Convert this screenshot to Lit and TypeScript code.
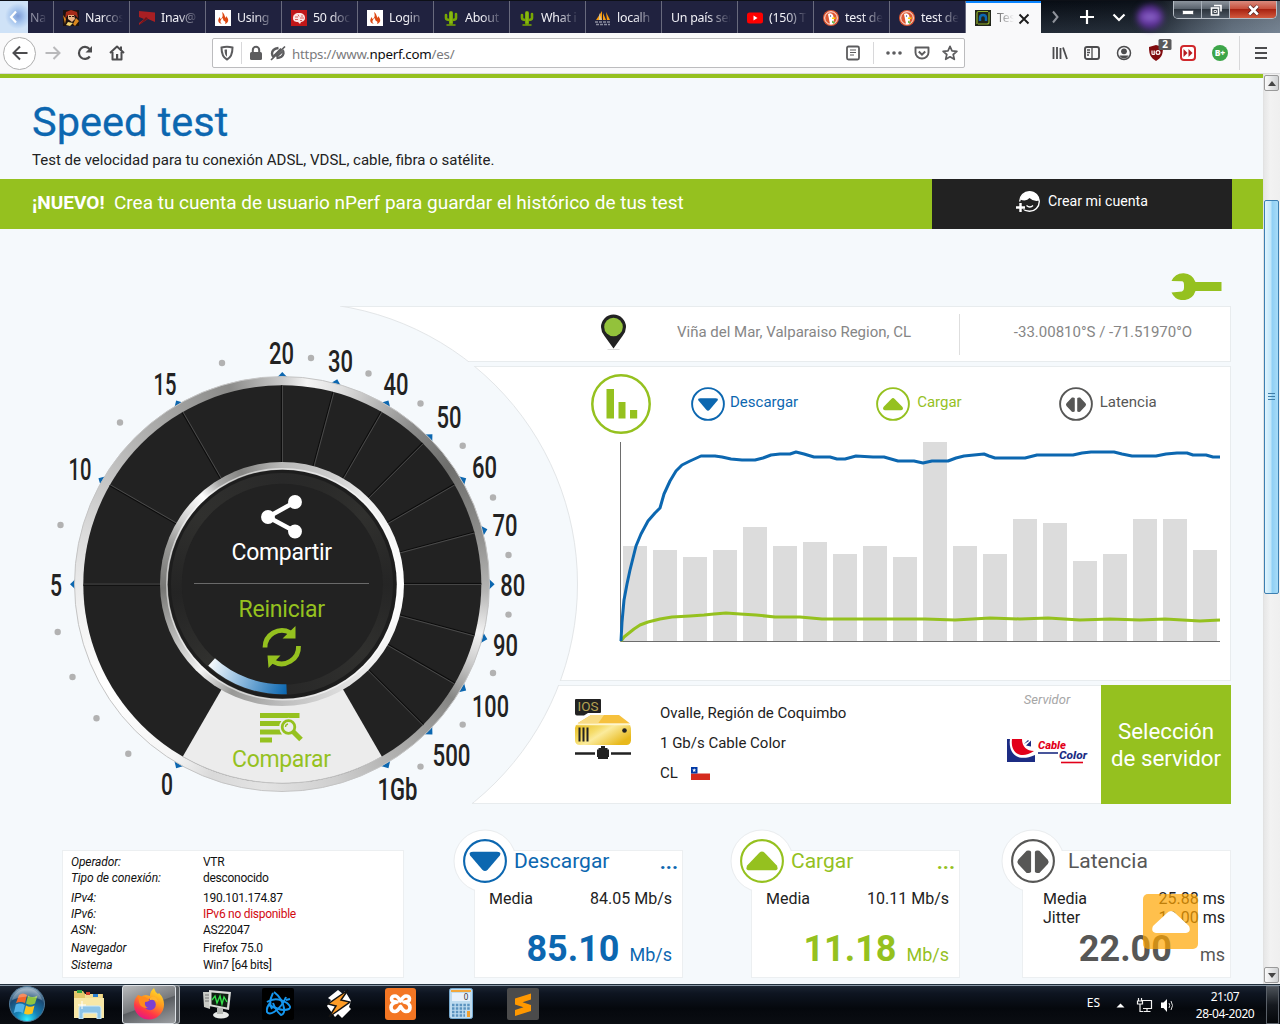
import { LitElement, html, svg, css, nothing } from "lit";
import { customElement } from "lit/decorators.js";

const LIME = "#95c11f";
const BLUE = "#0c67b0";
const GREY = "#575756";

type Kind = "down" | "up" | "lat";
const COLORS: Record<Kind, string> = { down: BLUE, up: LIME, lat: GREY };

const TABS = [
  { icon: "anime", text: "Narcos" },
  { icon: "inav", text: "Inav@" },
  { icon: "flame", text: "Using" },
  { icon: "brain", text: "50 doc" },
  { icon: "flame", text: "Login" },
  { icon: "cactus", text: "About" },
  { icon: "cactus", text: "What i" },
  { icon: "pma", text: "localh" },
  { icon: "", text: "Un país ser" },
  { icon: "yt", text: "(150) T" },
  { icon: "duck", text: "test de" },
  { icon: "duck", text: "test de" },
];

const BARS = [546, 550, 557, 550, 527, 546, 542, 554, 546, 557, 442, 546, 554, 519, 523, 561, 554, 519, 519, 550];

const DOWN_LINE =
  "621,641 622,622 624,600 627,584 630,570 636,546 641,534 648,521 655,513 660,508 664,494 670,481 676,471 682,465 690,461 701,456 715,456 722,457 731,459 742,460 755,460 763,458 771,455 780,454 790,454 796,452 804,454 814,457 830,457 837,459 845,459 856,456 873,457 884,457 891,459 898,461 914,461 923,463 932,461 948,461 956,458 964,456 984,454 989,456 995,458 1025,458 1037,455 1073,455 1082,453 1091,452 1108,452 1114,452 1122,454 1132,456 1156,456 1166,454 1177,453 1187,453 1193,455 1206,455 1213,457 1220,457";
const UP_LINE =
  "621,641 624,637 629,633 634,629 640,625 648,622 660,619 672,617 690,616 704,615 714,614 726,613 740,614 756,615 775,617 800,617 822,619 850,619 885,619 925,619 955,620 990,618 1020,619 1048,618 1080,620 1110,619 1140,620 1165,619 1200,621 1220,620";

const TICKS: [string, number, number, number, number][] = [
  ["0", 120, 167, 795, 12],
  ["5", 180, 56, 596, 12],
  ["10", 210, 80, 480, 23],
  ["15", 240, 165, 395, 23],
  ["20", 270, 281.5, 364, 25],
  ["30", 285, 340.5, 372, 25],
  ["40", 300, 396, 395, 25],
  ["50", 315, 449, 428, 25],
  ["60", 330, 484.5, 478, 25],
  ["70", 345, 505, 536, 25],
  ["80", 0, 512.7, 596, 25],
  ["90", 15, 505.5, 656, 25],
  ["100", 30, 490.5, 717, 37],
  ["500", 45, 451.5, 766, 38],
  ["1Gb", 60, 397.5, 800, 40],
];

const DOTS = [
  [222, 363], [311, 358], [120, 422.5], [60.5, 525], [368.5, 373.5], [420.5, 403.5], [462.7, 445.7],
  [493, 497.5], [508.5, 555], [508.5, 614.6], [493, 673], [462.7, 724.6], [420.5, 766.6],
  [57.7, 632], [72.5, 677], [96.5, 718.3], [128.3, 753.7],
];

const glyph = (kind: Kind) =>
  kind === "down"
    ? svg`<path d="M-14-6Q-16-9.500-11-9.500H11Q16-9.500 14-6L2.500 7.500Q0 10-2.500 7.500Z"/>`
    : kind === "up"
      ? svg`<path d="M-14 3.500L-2.500-8.500Q0-11 2.500-8.500L14 3.500Q16 8 12 8H-12Q-16 8-14 3.500Z"/>`
      : svg`<path d="M-1.800-9.500V9.500Q-2.500 11-6 10.500L-14 2Q-15.500 0-14-2L-6-10.500Q-2.500-11-1.800-9.500ZM1.800-9.500V9.500Q2.500 11 6 10.500L14 2Q15.500 0 14-2L6-10.500Q2.500-11 1.800-9.500Z"/>`;

const favicon = (name: string) => {
  switch (name) {
    case "anime":
      return svg`<path fill="#1d1210" d="M0 0h16v16H0z"/><path fill="#a52a18" d="M3 2l5-2 6 2 1 6-3-3H5L2 9z"/><path fill="#e9b183" d="M5 5l6 0 1 4-3 3-4-3z"/><path fill="#d9871f" d="M0 5l3 4-1 5zM13 8l3 3-4 5-2-2z"/><path fill="#f1d36d" d="M5 12l5 1-3 3-4-1z"/><path fill="#2b1410" d="M6 6h2v1H6zM9 6h2v1H9z"/>`;
    case "inav":
      return svg`<path fill="#a81f23" d="M0 1l16 1.500V12L9 9l-9 6z"/><path fill="#20223f" d="M0 7l5 2-5 4z"/><path fill="#6e1519" d="M0 15l9-6.500L7 7z"/>`;
    case "flame":
      return svg`<path fill="#fff" d="M0 0h16v16H0z"/><path fill="#dd4814" d="M7 2c3 2 2 4 4 6l0-2c4 4 2 7-1 8 1-2 0-3-1-3-1-1-1-2-1-3-2 1-4 4-1 6-4-1-5-4-2-7 0 1 0 2 1 2 2-2 2-4 1-7z"/>`;
    case "brain":
      return svg`<path fill="#c01718" d="M0 0h16v16H0z"/><path fill="#fbe6e3" d="M2 8c0-3 2-5 6-5s6 2 6 5-3 4-4 4l-1 2-2-2c-3 0-5-1-5-4z"/><path d="M4 7h3M7 4.500l1 2M9 8h4M4 9.500h3M10 6l2 0M9 10.500h2" stroke="#d0403c" fill="none" stroke-width=".8"/>`;
    case "cactus":
      return svg`<g stroke="#77a704" stroke-linecap="round" fill="none"><path stroke-width="4" d="M8 3v10"/><path stroke-width="2.600" d="M3 5v3q0 2 4 2M13 4v4q0 2-4 2"/><path stroke-width="1.500" d="M4 15h8"/></g><path d="M8 2v11" stroke="#9fd02c" stroke-width=".8"/>`;
    case "pma":
      return svg`<path fill="#f89c0e" d="M7 1v9H1zM8 3l3 7H8zM11 2l4 8h-3z"/><path fill="#d2c4a0" d="M4 3l3 7H4z"/><path stroke="#8a8d9e" stroke-width="1.500" d="M0 12h16M1 14.500h14" stroke-dasharray="3 1"/>`;
    case "yt":
      return svg`<rect y="2.500" width="16" height="11" rx="2.500" fill="#f00"/><path fill="#fff" d="M6.500 5.500v5l4-2.500z"/>`;
    case "duck":
      return svg`<circle cx="8" cy="8" r="8" fill="#de5833"/><circle cx="8" cy="8" r="6.300" fill="none" stroke="#fff" stroke-width=".9"/><path fill="#fff" d="M5 4q3-2 5 1l1 4-1 5-3 0z"/><path fill="#fdd20a" d="M9 7.500h4l-1 1.500H9z"/><path fill="#65bc46" d="M9 10.500l3 2-1 1.300-2-1z"/><circle cx="7.500" cy="6" r=".7" fill="#2d4f8e"/>`;
    default:
      return svg`<path fill="#20241a" d="M0 0h16v16H0z"/><path d="M2 14V3q0-1.500 1.500-1.500H13M14 2v10q0 2-2 2H3" fill="none" stroke="#8fae2a" stroke-width="1.200"/><path d="M5 11V8q0-3 3-3t3 3v3" fill="none" stroke="${BLUE}" stroke-width="2.400"/>`;
  }
};

const ico = (body: unknown, size = 16, cls = "") =>
  html`<svg class="ico ${cls}" width=${size} height=${size} viewBox="0 0 ${size} ${size}">${body}</svg>`;

@customElement("app-root")
export class AppRoot extends LitElement {
  static styles = css`
    :host { display: flex; flex-direction: column; width: 1280px; height: 1024px; overflow: hidden; background: #f5f9fc; font-family: Roboto, sans-serif; color: #222; }
    * { box-sizing: border-box; }
    svg { display: block; flex: none; }

    .tabs { display: flex; height: 33px; background: #0a0e17; border-top: 1px solid #0d1017; font: 12.4px "Noto Sans", "Open Sans", sans-serif; letter-spacing: -.25px; color: #f0f0f6; flex: none; }
    .scroll-l { flex: none; width: 28px; display: flex; align-items: center; justify-content: center; background: radial-gradient(circle at 18px 15px, #7c9bd6 0, #a9c7ee 7px, #cfe2f7 13px); }
    .tab { flex: none; width: 76px; display: flex; align-items: center; padding: 1px 0 0 9px; gap: 6px; background: #20223f; border-right: 1px solid #686a7d; }
    .tab .lbl { flex: 1; height: 18px; line-height: 18px; overflow: hidden; white-space: nowrap; margin-right: 6px; -webkit-mask-image: linear-gradient(90deg, #000 45%, transparent); mask-image: linear-gradient(90deg, #000 45%, transparent); }
    .tab.cut { width: 26px; padding-left: 2px; color: #8b8ca0; }
    .tab.cut .lbl { margin-right: 6px; }
    .tab.plain .lbl { -webkit-mask-image: linear-gradient(90deg, #000 60%, transparent); mask-image: linear-gradient(90deg, #000 60%, transparent); }
    .tab.active { background: #f9f9fa; border-right: 0; border-top: 2px solid #0a84ff; color: #666; padding-top: 0; width: 75px; }
    .tab.active .lbl { margin-right: 2px; -webkit-mask-image: linear-gradient(90deg, #000, transparent); mask-image: linear-gradient(90deg, #000, transparent); }
    .tab.active .close { margin: 2px 11px 0 -4px; }
    .aero { flex: 1; display: flex; align-items: flex-start; background: linear-gradient(180deg, rgba(10,14,20,.2), rgba(120,140,160,.25)), linear-gradient(90deg, #070c14 0%, #0b1119 45%, #39424d 62%, #5f6b78 80%, #76828f 100%); }
    .strip { display: flex; align-items: center; height: 31px; flex: none; }
    .strip svg { margin-left: 6px; margin-right: 10px; }
    .glow { width: 26px; height: 24px; border-radius: 50%; background: radial-gradient(ellipse 14px 6px at center, #9a80d8, rgba(110,60,170,0.9) 80%, transparent), #5b2f96; filter: blur(3px); }
    .win { display: flex; flex: none; margin-left: 10px; height: 18px; width: 104px; border: 1px solid #b7bec6; border-top: 0; border-radius: 0 0 5px 5px; overflow: hidden; }
    .win .b { display: flex; align-items: center; justify-content: center; height: 17px; width: 28px; border-right: 1px solid #a7afb8; background: linear-gradient(#8c949d, #5a636d 45%, #2c343d 50%, #4d5763); }
    .win .x { width: 46px; border: 0; background: linear-gradient(#d98a7d, #c8503d 45%, #a82312 50%, #d2593d); }

    .bar { display: flex; align-items: center; height: 41px; background: #f9f9fa; border-bottom: 1px solid #dcdcde; padding-left: 3px; flex: none; }
    .cell { flex: none; width: 32px; height: 32px; display: flex; align-items: center; justify-content: center; color: #4c4c4e; }
    .back { border: 1px solid #aeaeae; border-radius: 50%; background: #fff; width: 33px; height: 33px; margin-right: 1px; }
    .url { display: flex; flex: none; align-items: center; width: 753px; height: 30px; margin-left: 79px; border: 1px solid #bcbcbe; border-radius: 2px; background: #fff; font: 13.3px "Noto Sans", "Open Sans", sans-serif; letter-spacing: -.23px; color: #7a7a7c; }
    .url .cell { width: 28px; height: 28px; }
    .url .wide { width: 40px; }
    .url .more { margin-left: 6px; fill: #5c5c5e; }
    .url b { font-weight: 400; color: #0c0c0d; }
    .addr { flex: 1; white-space: nowrap; padding: 2px 0 0 6px; }
    .sep { width: 1px; height: 22px; background: #d8d8da; }
    .tools { display: flex; align-items: center; margin-left: 79px; }
    .tools .sep { height: 34px; margin-left: 3px; }
    .tools .last { width: 41px; }

    .view { display: flex; height: 910px; flex: none; }
    .page { width: 1263px; border-top: 4px solid #95c11f; position: relative; overflow: hidden; display: flex; flex-direction: column; }
    .scroll { width: 17px; border-left: 1px solid #e2e2e2; background: linear-gradient(90deg, #e6e6e6, #f2f2f2 40%, #efefef); display: flex; flex-direction: column; align-items: flex-start; padding: 1px 0; }
    .sbtn { width: 15px; height: 16px; border: 1px solid #9a9a9a; border-radius: 2px; background: linear-gradient(90deg, #fafafa, #cfd1d3); display: flex; align-items: center; justify-content: center; }
    .thumb { width: 15px; height: 394px; margin: 109px 0 auto; border: 1px solid #3c7fb1; border-radius: 2px; background: linear-gradient(90deg, #e0f4fd, #bfe6fa 45%, #90d0f5 55%, #a8dcf7); display: flex; align-items: center; justify-content: center; }
    h1 { margin: 20px 0 0 32px; font-size: 41.5px; font-weight: 400; line-height: 48px; color: #0c67b0; -webkit-text-stroke: .3px #0c67b0; }
    .sub { margin: 4px 0 0 32px; font-size: 15px; line-height: 20px; }
    .promo { display: flex; align-items: center; justify-content: space-between; height: 50px; margin-top: 9px; padding: 0 31px 0 32px; background: #95c11f; color: #fff; font-size: 19px; }
    .promo p { margin: 0 0 3px; white-space: pre; }
    .promo b { font-weight: 700; }
    .join { width: 300px; height: 50px; padding: 0 1px 6px 0; background: #222; display: flex; align-items: center; justify-content: center; gap: 7px; font-size: 14.2px; }
    .wrench { height: 77px; padding: 44px 41px 0 0; display: flex; justify-content: flex-end; align-items: flex-start; }

    .stage { display: grid; grid-template-columns: 340px 891px; height: 498px; }
    .gauge { grid-area: 1 / 1; width: 577px; height: 498px; overflow: visible; z-index: 1; }
    .panels { grid-area: 1 / 2; display: flex; flex-direction: column; gap: 4px; align-items: flex-end; }
    .panel { position: relative; overflow: hidden; background: #fff; box-shadow: inset 0 0 0 1px #e8ecee; display: flex; }
    .hole { position: absolute; width: 564px; height: 564px; border: 1px solid #e3e6e8; border-radius: 50%; background: #f5f9fc; }
    .p1 { width: 891px; height: 56px; align-items: center; color: #868686; font-size: 15px; padding: 0 0 4px 260px; }
    .p1 .hole { left: -326px; top: -4px; }
    .p1 .place { width: 332px; text-align: center; padding-left: 2px; }
    .p1 .rule { width: 1px; height: 41px; background: #dedede; margin-top: 4px; }
    .p1 .coord { flex: 1; text-align: center; padding-left: 15px; }
    .p2 { width: 761px; height: 315px; flex-direction: column; padding-left: 120px; }
    .p2 .hole { left: -456px; top: -64px; }
    .p3 { width: 759px; height: 119px; }
    .p3 .hole { left: -458px; top: -383px; }
    .legend { display: flex; height: 76px; align-items: center; font-size: 15px; }
    .legend .it { display: flex; align-items: center; gap: 5px; }
    .legend .it span { margin-top: -5px; }
    .legend .up span, .legend .lat span { padding-left: 2px; }
    .legend .down { margin-left: 39px; color: #0c67b0; }
    .legend .up { margin-left: 78px; color: #95c11f; }
    .legend .lat { margin-left: 97px; color: #575756; }
    .chart { margin-left: 29px; }
    .server { margin: 13px 0 0 102px; }
    .where { margin: 13px 0 0 28px; width: 340px; font-size: 15px; line-height: 30px; display: flex; flex-direction: column; }
    .where div { display: flex; align-items: center; gap: 13px; }
    .host { display: flex; flex-direction: column; align-items: center; width: 101px; margin-left: auto; padding: 7px 7px 0 0; font-size: 13px; font-style: italic; color: #a6a6a6; }
    .host svg { margin-top: 30px; }
    .pick { width: 130px; background: #95c11f; color: #fff; font-size: 22.3px; line-height: 27px; display: flex; align-items: center; text-align: center; justify-content: center; }

    .ring { width: 416px; height: 416px; border-radius: 50%; border: 1px solid #c4c4c4; background: conic-gradient(#c9c9c9 0, #f4f4f4 7deg, #dedede 17deg, #8a8a89 40deg, #6e6e6c 55deg, #8d8d8b 75deg, #b5b5b4 92deg, #f3f3f3 104deg, #cfcfcf 112deg, #868684 124deg, #a8a8a7 142deg, #cfcfcf 165deg, #e3e3e3 185deg, #d9d9d9 200deg, #f5f5f5 212deg, #fff 240deg, #f2f2f2 262deg, #dadada 285deg, #b3b3b2 315deg, #8b8b89 345deg, #c9c9c9 360deg); }
    .hub { width: 244px; height: 244px; border-radius: 50%; background: conic-gradient(#b9b9b8 0, #cdcdcd 25deg, #eee 45deg, #fff 90deg, #f2f2f2 125deg, #ddd 150deg, #bdbdbd 180deg, #989896 205deg, #f4f4f4 223deg, #c2c2c1 240deg, #767674 268deg, #9a9a98 290deg, #d0d0cf 303deg, #fff 318deg, #a6a6a5 328deg, #858583 340deg, #b9b9b8 360deg); }
    .track { width: 222px; height: 222px; border-radius: 50%; background: conic-gradient(#292929, #2a2a29 20deg, #30302e 50deg, #252525 90deg, #30302e 130deg, #282828 180deg, #30302e 225deg, #242424 265deg, #30302e 310deg, #292929); }

    .cards { display: flex; align-items: flex-start; margin: 46px 0 0 62px; }
    .card { position: relative; background: #fff; border: 1px solid #eceff1; height: 128px; }
    .info { width: 342px; padding: 3px 8px; display: grid; grid-template-columns: 132px 1fr; grid-template-rows: 16px 18px 18px 16px 18px 17px 16px; line-height: 16px; font-size: 12px; color: #111; align-content: start; }
    .info i { letter-spacing: -.1px; }
    .info span { letter-spacing: -.28px; }
    .info .gap { padding-top: 2px; }
    .info .red { color: #d20a11; }
    .metric { width: 209px; }
    .badge { position: absolute; left: -22px; top: -22px; }
    .ttl { position: relative; display: flex; justify-content: space-between; padding: 0 4px 0 39px; font-size: 21px; line-height: 21px; }
    .ttl b { font-weight: 700; line-height: 22px; height: 21px; }
    .rows { height: 55px; padding-top: 17px; }
    .row { display: flex; justify-content: space-between; padding: 0 10px 0 14px; font-size: 16px; line-height: 19px; color: #222; }
    .val { display: flex; justify-content: flex-end; align-items: baseline; padding-right: 10px; line-height: 44px; font-size: 18px; }
    .val strong { font-size: 36px; font-weight: 700; margin-right: 10px; }
    .latency .ttl { padding-left: 45px; }
    .latency .row { padding: 0 5px 0 20px; }
    .latency .val { padding-right: 5px; }
    .latency .val strong { margin-right: 28px; }
    .m1 { margin-left: 70px; }
    .m2 { margin-left: 68px; }
    .m3 { margin-left: 62px; }
    .totop { position: absolute; left: 1143px; top: 816px; width: 55px; height: 55px; border-radius: 5px; background: rgba(255,165,0,.7); display: flex; align-items: center; justify-content: center; }

    .task { flex: none; height: 40px; border-top: 1px solid #22303c; display: flex; align-items: center; background: linear-gradient(#8a98a6 0, #8a98a6 1px, #1c2532 1px, #0e1521 8px, #05080d 60%, #0a0d12); color: #fff; font: 12px "Noto Sans", "Open Sans", sans-serif; }
    .task .app { width: 61.200px; display: flex; justify-content: center; padding-bottom: 2px; }
    .task .app:first-child { width: 53px; }
    .task .app.e { width: 72px; }
    .task .fx { width: 54px; height: 39px; margin-right: 10px; margin-left: -3px; border: 1px solid #dfe3e8; border-radius: 3px; background: linear-gradient(160deg, #b9bbbd, #77797c 50%, #5a5d61 52%, #9da0a3); align-items: center; box-shadow: 4px 0 0 -1px #55595e, 4px 0 0 0 #a5a9ad; }
    .tray { margin-left: auto; display: flex; align-items: center; height: 100%; }
    .tray svg { margin-right: 11px; }
    .es { margin-top: -5px; }
    .clock { width: 76px; text-align: center; line-height: 17px; letter-spacing: -.4px; }
    .peek { width: 13px; height: 38px; margin-left: 3px; margin-right: 1px; border: 1px solid #5a6068; background: linear-gradient(#4c5259, #15191f 50%, #05070a); }
  `;

  private chrome() {
    return html`
      <div class="tabs">
        <div class="scroll-l">${ico(svg`<path d="M10 2.500L5 8l5 5.500" fill="none" stroke="#fff" stroke-width="2.200"/>`)}</div>
        <div class="tab cut"><span class="lbl">Na</span></div>
        ${TABS.map(
          (t) => html`<div class="tab ${t.icon ? "" : "plain"}">${t.icon ? ico(favicon(t.icon)) : nothing}<span class="lbl">${t.text}</span></div>`,
        )}
        <div class="tab active">
          ${ico(favicon("nperf"))}<span class="lbl">Tes</span>
          <svg class="close" width="12" height="12" viewBox="0 0 12 12"><path d="M1.500 1.500l9 9M10.500 1.500l-9 9" stroke="#1c1c1c" stroke-width="1.900"/></svg>
        </div>
        <div class="aero">
          <div class="strip">
            ${ico(svg`<path d="M6 2.500L10.500 8 6 13.500" fill="none" stroke="#8f939b" stroke-width="2"/>`)}
            ${ico(svg`<path d="M8 1v14M1 8h14" stroke="#fff" stroke-width="2.200"/>`)}
            ${ico(svg`<path d="M2.500 5.500L8 11l5.500-5.500" fill="none" stroke="#fff" stroke-width="2.200"/>`)}
            <div class="glow"></div>
          </div>
          <div class="win">
            <div class="b"><svg width="12" height="12"><rect x=".5" y="6.500" width="11" height="4" rx="1" fill="#fff" stroke="#545b64"/></svg></div>
            <div class="b"><svg width="12" height="12"><path d="M4 1.500h7v6M1.500 4h7v7h-7z" fill="none" stroke="#fff" stroke-width="1.600"/><path d="M4 6.500h2.500v2H4z" fill="none" stroke="#ddd"/></svg></div>
            <div class="b x"><svg width="13" height="12"><path d="M2 2l9 8.500M11 2l-9 8.500" stroke="#4c2020" stroke-width="4"/><path d="M2.200 2l8.600 8.500M10.800 2l-8.600 8.500" stroke="#fff" stroke-width="2.600"/></svg></div>
          </div>
        </div>
      </div>
      <div class="bar">
        <div class="cell back">${ico(svg`<path d="M15.500 8H1.500M8 1.500L1.500 8 8 14.500" fill="none" stroke="#4c4c4e" stroke-width="2"/>`)}</div>
        <div class="cell">${ico(svg`<path d="M.5 8h14M8.500 2L14.500 8l-6 6" fill="none" stroke="#b9b9bb" stroke-width="2"/>`)}</div>
        <div class="cell">${ico(svg`<path d="M12.800 11.500A6 6 0 1 1 12.500 4" fill="none" stroke="currentColor" stroke-width="2.200"/><path d="M15 1v6.500H8.500z" fill="currentColor"/>`)}</div>
        <div class="cell">${ico(svg`<path d="M1 8l7-6.500L15 8M3.500 7v7.500h9V7" fill="none" stroke="currentColor" stroke-width="2" stroke-linejoin="round"/><path d="M7 9h2.200v5H7zM11 1.500h2v4h-2z" fill="currentColor"/>`)}</div>
        <div class="url">
          <div class="cell">${ico(svg`<path d="M2.500 2.500Q8 1 13.500 2.500C13.500 9 12 12.500 8 14.500 4 12.500 2.500 9 2.500 2.500z" fill="none" stroke="#5c5c5e" stroke-width="2"/><path d="M8 4.500c-1.500 0-2.500.2-2.500.2.200 4 1 6 2.500 7z" fill="#5c5c5e"/>`)}</div>
          <div class="sep"></div>
          <div class="cell">${ico(svg`<rect x="2" y="7" width="12" height="8" rx="1.500" fill="#5c5c5e"/><path d="M4.800 8V5a3.200 3.200 0 0 1 6.400 0v3" fill="none" stroke="#5c5c5e" stroke-width="2"/>`)}</div>
          ${ico(svg`<path d="M8.500 3Q2 4 2 8.500 2 11 4 12.500M12.500 5Q14 6.500 13.500 8.500 12.500 13 6.500 13" fill="none" stroke="#5c5c5e" stroke-width="2.400"/><path d="M15 1.500L1 15M11 3.500L3.500 11M12.500 6.500L6.500 12" stroke="#5c5c5e" stroke-width="1.700"/>`, 16, "perm")}
          <div class="addr">https://www.<b>nperf.com</b>/es/</div>
          <div class="cell wide">${ico(svg`<rect x="2" y="1.500" width="12" height="13" rx="1.500" fill="none" stroke="#5c5c5e" stroke-width="1.800"/><path d="M5 5h6M5 7.500h6M5 10h4" stroke="#5c5c5e" stroke-width="1.200"/>`)}</div>
          <div class="sep"></div>
          <div class="cell more">${ico(svg`<circle cx="2" cy="8" r="1.800"/><circle cx="8" cy="8" r="1.800"/><circle cx="14" cy="8" r="1.800"/>`, 16)}</div>
          <div class="cell">${ico(svg`<path d="M1.500 2.500h13v5a6.500 6 0 0 1-13 0z" fill="none" stroke="#5c5c5e" stroke-width="1.900" stroke-linejoin="round"/><path d="M4.800 6.500L8 9.700l3.200-3.200" fill="none" stroke="#5c5c5e" stroke-width="2"/>`)}</div>
          <div class="cell">${ico(svg`<path d="M8 1.300l2 4.500 4.900.5-3.700 3.200 1.100 4.800L8 11.800l-4.300 2.500 1.100-4.800L1.100 6.300 6 5.800z" fill="none" stroke="#5c5c5e" stroke-width="1.700" stroke-linejoin="round"/>`)}</div>
        </div>
        <div class="tools">
          <div class="cell">${ico(svg`<path d="M1.500 2v12M5 2v12M8.500 3v11M11 2.500l4 11.500" stroke="currentColor" stroke-width="1.800"/>`)}</div>
          <div class="cell">${ico(svg`<rect x="1" y="2" width="14" height="12" rx="2" fill="none" stroke="currentColor" stroke-width="1.900"/><path d="M8 2v12M3 5h3M3 7.500h3M3 10h2" stroke="currentColor" stroke-width="1.300"/>`)}</div>
          <div class="cell">${ico(svg`<circle cx="8" cy="8" r="6.500" fill="none" stroke="currentColor" stroke-width="1.500"/><circle cx="8" cy="6.300" r="2.900" fill="currentColor"/><path d="M3.500 10.500h9Q11 13.500 8 13.500t-4.500-3z" fill="currentColor"/>`)}</div>
          <div class="cell"><svg width="32" height="32" viewBox="0 0 32 32"><path d="M16 8l7 2c0 8-2 11-7 14-5-3-7-6-7-14z" fill="#800b0e"/><path d="M12 13.500v3q0 1 1 1h1.200v-4" fill="none" stroke="#fff" stroke-width="1.200"/><circle cx="18" cy="15.500" r="1.900" fill="none" stroke="#fff" stroke-width="1.200"/><rect x="18.500" y="2" width="13" height="11" rx="1.500" fill="#59595b"/><text x="25" y="11.300" font-family="Noto Sans, sans-serif" font-size="10" font-weight="700" fill="#fff" text-anchor="middle">2</text></svg></div>
          <div class="cell">${ico(svg`<rect x="1" y="1" width="14" height="14" rx="3" fill="#fff" stroke="#d0282c" stroke-width="2"/><path d="M3.500 4l4 4-4 4zM8.500 4l4 4-4 4z" fill="#b71c20"/>`)}</div>
          <div class="cell">${ico(svg`<circle cx="8" cy="8" r="8" fill="#3da549"/><text x="8" y="11" font-family="Noto Sans, sans-serif" font-size="8.500" font-weight="800" fill="#fff" text-anchor="middle">B+</text>`)}</div>
          <div class="sep"></div>
          <div class="cell last">${ico(svg`<path d="M2 3h12M2 8h12M2 13h12" stroke="currentColor" stroke-width="1.900"/>`)}</div>
        </div>
      </div>`;
  }

  private gauge() {
    return html`<svg class="gauge" viewBox="0 306 577 498">
      <defs>
        <linearGradient id="arc" gradientUnits="userSpaceOnUse" x1="208" y1="660" x2="287" y2="690">
          <stop offset="0" stop-color="#fff" /><stop offset=".45" stop-color="#8fbbdf" /><stop offset="1" stop-color="#0c67b0" />
        </linearGradient>
      </defs>
      ${TICKS.map(([t, a, x, y, w]) => svg`
        <path d="M206-6L212.300 0L206 6Z" fill="${BLUE}" transform="translate(282.300 584.300) rotate(${a})"/>
        <text x="${x - w / 2}" y="${y}" textLength="${w}" lengthAdjust="spacingAndGlyphs" font-family="Roboto, sans-serif" font-size="32" font-weight="500" fill="#222">${t}</text>`)}
      ${DOTS.map(([x, y]) => svg`<circle cx="${x}" cy="${y}" r="3.200" fill="#b2b2b2"/>`)}
      <foreignObject x="74.300" y="376.300" width="416" height="416"><div class="ring"></div></foreignObject>
      <circle cx="282.300" cy="584.300" r="199" fill="#222" />
      ${TICKS.filter((t) => t[1] !== 120 && t[1] !== 60).map(
        (t) => svg`<g transform="translate(282.300 584.300) rotate(${t[1]})"><path d="M120-.9H199" stroke="#0c0c0c"/><path d="M120 .2H199" stroke="#505050" stroke-width=".8"/></g>`,
      )}
      <path d="M182.800 756.600L282.300 584.300L381.800 756.600A199 199 0 0 1 182.800 756.600Z" fill="#ececec" />
      <path d="M381.800 756.600A199 199 0 0 1 182.800 756.600" fill="none" stroke="#c4c4c4" />
      <foreignObject x="160.300" y="462.300" width="244" height="244"><div class="hub"></div></foreignObject>
      <circle cx="282.300" cy="584.300" r="115.500" fill="none" stroke="#fff" stroke-opacity=".55" stroke-width="1.500" />
      <circle cx="282.300" cy="584.300" r="114.500" fill="#1d1d1d" />
      <foreignObject x="171.300" y="473.300" width="222" height="222"><div class="track"></div></foreignObject>
      <circle cx="282.300" cy="584.300" r="100.500" fill="#222" />
      <path d="M211.600 662A105 105 0 0 0 286.600 689.200" fill="none" stroke="url(#arc)" stroke-width="10" />
      <path d="M194 583.500H369" stroke="#6a6a6a" />
      <g stroke="#fff" stroke-width="4.500" fill="#fff"><path d="M295 502L268 517L295 531.500" fill="none" /><circle cx="268" cy="517" r="4.700" /><circle cx="295" cy="502" r="4.700" /><circle cx="295" cy="531.500" r="4.700" /></g>
      <text x="231.500" y="560" textLength="100.500" font-size="23" fill="#fff">Compartir</text>
      <text x="238.500" y="617" textLength="86.500" font-size="23" fill="${LIME}">Reiniciar</text>
      <text x="232" y="767" textLength="99" font-size="23" fill="${LIME}">Comparar</text>
      <g fill="none" stroke="${LIME}" stroke-width="4.800"><path d="M265 647.500A17 17 0 0 1 290 632.500" /><path d="M298.500 646A17 17 0 0 1 273 661.500" /></g>
      <path d="M295.500 626V638.500H282.500ZM267.500 655.500H280.500L268.500 668Z" fill="${LIME}" />
      <path d="M260 713h39.500v5H260zM260 721h22q-2 2-2 5h-20zM260 729.500h20q0 3 2 5h-22zM260 737.500h12v5h-12z" fill="${LIME}" />
      <circle cx="288.500" cy="727" r="9.300" fill="#ececec" /><circle cx="288.500" cy="727" r="6.300" fill="none" stroke="${LIME}" stroke-width="2.800" />
      <path d="M293 731.500L301 739.500" stroke="${LIME}" stroke-width="5.200" /><path d="M285.500 727q0-2.500 2.500-3" fill="none" stroke="${LIME}" stroke-width="1.300" />
    </svg>`;
  }

  private legend(kind: Kind, label: string) {
    return html`<div class="it ${kind}">
      <svg width="34" height="34" viewBox="-17 -17 34 34"><circle r="15.900" fill="none" stroke="${COLORS[kind]}" stroke-width="1.900"/><g fill="${COLORS[kind]}" transform="translate(0 .7) scale(.68)">${glyph(kind)}</g></svg>
      <span>${label}</span>
    </div>`;
  }

  private panels() {
    return html`<div class="panels">
      <section class="panel p1">
        <div class="hole"></div>
        <svg width="27" height="36" viewBox="0 0 27 36"><path d="M13.500 34.500L4.500 22Q1 17.500 1 13a12.500 12.500 0 0 1 25 0q0 4.500-3.500 9z" fill="#222"/><circle cx="13.500" cy="13" r="9.300" fill="#93c23b"/><path d="M7.500 35.500h12" stroke="#ddd"/></svg>
        <div class="place">Viña del Mar, Valparaiso Region, CL</div>
        <div class="rule"></div>
        <div class="coord">-33.00810°S / -71.51970°O</div>
      </section>
      <section class="panel p2">
        <div class="hole"></div>
        <div class="legend">
          <svg width="62" height="62" viewBox="0 0 62 62"><circle cx="31" cy="31" r="28.700" fill="none" stroke="${LIME}" stroke-width="2.500"/><path d="M16.500 16h7.500v29.500h-7.500zM28.500 29h7v16.500h-7zM40 37h7.200v8.500H40z" fill="${LIME}"/></svg>
          ${this.legend("down", "Descargar")} ${this.legend("up", "Cargar")} ${this.legend("lat", "Latencia")}
        </div>
        <svg class="chart" width="602" height="204" viewBox="619 442 602 204">
          ${BARS.map((y, i) => svg`<rect x="${623 + i * 30}" y="${y}" width="24" height="${641 - y}" fill="#dcdcdc"/>`)}
          <path d="M620.500 442V641.500H1220" fill="none" stroke="#6d6d6d" />
          <polyline points="${UP_LINE}" fill="none" stroke="${LIME}" stroke-width="3" stroke-linejoin="round" />
          <polyline points="${DOWN_LINE}" fill="none" stroke="${BLUE}" stroke-width="3" stroke-linejoin="round" />
        </svg>
      </section>
      <section class="panel p3">
        <div class="hole"></div>
        <svg class="server" width="58" height="62" viewBox="0 0 58 62">
          <defs><linearGradient id="gold" x2="1" y2=".6"><stop offset="0" stop-color="#e6bb1e"/><stop offset=".4" stop-color="#f5dc6a"/><stop offset=".55" stop-color="#fbeb9c"/><stop offset="1" stop-color="#e8b91c"/></linearGradient></defs>
          <path d="M2 1h24q1 0 1 1v12q0 1-1 1H14l-4 2.500H3q-2 0-2-2V2q0-1 1-1z" fill="#222"/><text x="3.500" y="12.500" font-size="13.500" fill="#b5a253" textLength="21">IOS</text>
          <path d="M4 25L17 17H45L56 25.500H4Z" fill="#f6c13d"/><path d="M4 25L17 17H30L24 25.500H4Z" fill="#f9dc84"/>
          <rect x="1" y="26" width="56" height="21" rx="4.500" fill="url(#gold)"/><path d="M3 26.500H55" stroke="#fff6cc" stroke-width="1.600"/>
          <path d="M5.500 29.500v14M9.500 29.500v14M13.500 29.500v14" stroke="#222" stroke-width="2"/><circle cx="50.500" cy="32.500" r="2.300" fill="#222"/>
          <path d="M1 55.500H21M37 55.500H57" stroke="#222" stroke-width="2.600"/><path d="M27 48h4v2h2.500v1.500h1.500v7.500h-1v2h-10v-2h-1v-7.500h1.500V50H27z" fill="#222"/>
        </svg>
        <div class="where"><div>Ovalle, Región de Coquimbo</div><div>1 Gb/s Cable Color</div>
          <div>CL <svg width="19" height="13"><path fill="#fff" d="M0 0h19v6H0z"/><path fill="#d52b1e" d="M0 6.500h19V13H0z"/><path fill="#0039a6" d="M0 0h6.500v6.500H0z"/><path fill="#fff" d="M3.200 1.300l.6 1.300h1.400l-1.100 1 .4 1.500-1.300-.9-1.300.9.400-1.500-1.100-1h1.400z"/></svg></div>
        </div>
        <div class="host">Servidor
          <svg width="81" height="28" viewBox="0 0 81 28">
            <path d="M0 2h28v23H0z" fill="#1c2c83"/><path d="M3 2C1 16 10 26 28 18V2Z" fill="#fff"/><path d="M5 2c-2 14 9 21 22 12-7 0-12-4-12-12z" fill="#e2001a"/><path d="M19 8.500l5-5 0 6zM17 7l4-4 1 1z" fill="#1c2c83"/>
            <text x="31" y="12" font-size="10.500" font-weight="800" font-style="italic" fill="#e2001a" textLength="28" lengthAdjust="spacingAndGlyphs">Cable</text>
            <text x="52" y="22" font-size="10.500" font-weight="800" font-style="italic" fill="#1c2c83" textLength="28" lengthAdjust="spacingAndGlyphs">Color</text>
            <path d="M31 16h20" stroke="#1c2c83" stroke-width="1.600"/><path d="M54 25.500h22" stroke="#e2001a" stroke-width="1.600"/>
          </svg>
        </div>
        <div class="pick">Selección<br />de servidor</div>
      </section>
    </div>`;
  }

  private metric(kind: Kind, cls: string, title: string, rows: [string, string][], value: string, unit: string) {
    const c = COLORS[kind];
    return html`<section class="card metric ${cls}" style="color:${c}">
      <svg class="badge" width="64" height="64" viewBox="-32 -32 64 64">
        <circle r="31" fill="#fff" stroke="#e9ecee"/><path d="M-10-10H32V32H-10Z" fill="#fff"/>
        <circle r="20.900" fill="none" stroke="${c}" stroke-width="2.100"/><g fill="${c}" transform="translate(0 .8) scale(1.060)">${glyph(kind)}</g>
      </svg>
      <div class="ttl"><span>${title}</span>${kind === "lat" ? nothing : html`<b>...</b>`}</div>
      <div class="rows">${rows.map(([a, b]) => html`<div class="row"><span>${a}</span><span>${b}</span></div>`)}</div>
      <div class="val"><strong>${value}</strong><span>${unit}</span></div>
    </section>`;
  }

  private taskbar() {
    return html`<div class="task">
      <div class="app"><svg width="38" height="38" viewBox="0 0 38 38"><defs><radialGradient id="orb" cx=".5" cy=".95" r=".9"><stop offset="0" stop-color="#2ff0ff"/><stop offset=".35" stop-color="#1683b8"/><stop offset=".75" stop-color="#1b4a74"/><stop offset="1" stop-color="#8fa9bd"/></radialGradient></defs>
        <circle cx="19" cy="19" r="17.500" fill="url(#orb)" stroke="#4e7796"/><path d="M11 10q4-3 8 0l-2 8q-4-2-9 0z" fill="#f0672b"/><path d="M20 10.500q4 3 9.500 0l-2.500 8q-4.500 2.500-9 0z" fill="#8fc441"/><path d="M7.800 19.500q4.500-2 9 .5l-2 8q-4-2.500-9 0z" fill="#52b2e8"/><path d="M18 20.500q4 2.500 8.500 0l-2 8q-5 2-8.500 0z" fill="#fcc41e"/><path d="M4 15a15.500 15.500 0 0 1 30 0q-15-7-30 0z" fill="#fff" opacity=".25"/></svg></div>
      <div class="app e"><svg width="32" height="30" viewBox="0 0 32 30"><path d="M1 2h9l2 3h18v23H1z" fill="#e3c66a"/><path d="M12 5h17v5H12z" fill="#f3dc92"/><path d="M4 1h5v3H4z" fill="#33a345"/><path d="M13 3h4v3h-4z" fill="#d13b2a"/><path d="M20 5h5v3h-5z" fill="#2b7fd0"/><path d="M1 9h30v20H1z" fill="#f7e7a7"/><path d="M6 30V19q0-2 2-2h18q2 0 2 2v11h-4v-6H10v6z" fill="#8cc4e8" stroke="#cfeaf9"/><path d="M9 12v8M5 16h8" stroke="#fff"/></svg></div>
      <div class="app fx"><svg width="32" height="32" viewBox="0 0 32 32"><defs><linearGradient id="ff" x1=".8" y1="0" x2=".3" y2="1"><stop offset="0" stop-color="#ffe22e"/><stop offset=".4" stop-color="#ff9a1f"/><stop offset=".75" stop-color="#ff3647"/><stop offset="1" stop-color="#e31587"/></linearGradient></defs><path d="M5 7q2 1 3 2 2-2 5-2l4 1q0-5 4-8 1 4 4 6l1-1q5 5 5 11a15 15 0 0 1-30 1Q1 11 5 7z" fill="url(#ff)"/><circle cx="17" cy="16.500" r="5.800" fill="#7b3fd1"/><path d="M5 7q4 2 7 2l5 3q-2 2-5 2-1 4 3 6-8 0-9-6z" fill="#ff8a1c"/><path d="M17 10q6-4 8 4-3-3-8-2z" fill="#ffb52e"/></svg></div>
      <div class="app"><svg width="32" height="30" viewBox="0 0 32 30"><path d="M2 3h8l-1 17-6-2z" fill="#c9cbc6"/><path d="M4 6h4M4 9h4M4 12h4" stroke="#777"/><path d="M8 1l22 2-2 18L8 17z" fill="#d9dbd8"/><path d="M10.500 3.500l17 1.500-1.500 13.500-15.500-3z" fill="#0f1d12"/><path d="M11 11l3-4 2 7 3-7 2 8 2-7 3 5" fill="none" stroke="#32e04a" stroke-width="1.400"/><ellipse cx="20" cy="26" rx="8" ry="3.500" fill="#e8eae8"/><path d="M16 19h6v6h-6z" fill="#b5b8b4"/></svg></div>
      <div class="app"><svg width="32" height="32" viewBox="0 0 32 32"><rect width="32" height="32" rx="2" fill="#000"/><g fill="none" stroke="#1596ee" stroke-width="2"><path d="M5 14q9-6 20 1 5 4 2 6-7 3-20-4"/><path d="M12 4q8 6 10 16 1 6-3 7-5-4-8-12"/><path d="M24 9q-4 10-12 15-5 3-7 0-1-5 4-10M10 21q-4-6 1-16M24 12l4-1"/></g></svg></div>
      <div class="app"><svg width="30" height="30" viewBox="0 0 30 30"><path d="M14 1l5 4 2-3 6 10-2 6 2 2-9 9-4-4-3 3L3 17l4-6-3-2z" fill="#fff"/><path d="M24 1L4 15l8 2-7 11 21-15-9-2z" fill="#ff9c26" stroke="#141414" stroke-width="1.500"/></svg></div>
      <div class="app"><svg width="31" height="32" viewBox="0 0 31 32"><rect width="31" height="32" rx="3" fill="#f37623"/><g fill="none" stroke="#fff" stroke-width="3.600" stroke-linejoin="round"><path d="M12 14Q6 14 6.500 10.500 7 8 10 8q2.500 0 5.500 5 3-5 5.500-5 3 0 3.500 2.500Q25 14 19 14q6 1 6 5.500 0 4-4 4-2.500 0-5.500-5-3 5-5.500 5-4 0-4-4Q6 15 12 14z"/></g></svg></div>
      <div class="app"><svg width="24" height="31" viewBox="0 0 24 31"><rect x=".5" y=".5" width="23" height="30" rx="2" fill="#bfdcf0" stroke="#76a9cf"/><path d="M2 2h20v2H2z" fill="#f2a73c"/><path d="M3 5h18v8H3z" fill="#e9f1fb"/><text x="17" y="12" font-size="8" fill="#333" text-anchor="middle">0</text><path d="M3 17h18M3 20.500h18M3 24h13M3 27.500h13" stroke="#5c93bf" stroke-width="2.400" stroke-dasharray="2.500 1.300"/><path d="M18 23h3v6h-3z" fill="#f0a030"/></svg></div>
      <div class="app"><svg width="32" height="32" viewBox="0 0 32 32"><rect width="32" height="32" rx="2" fill="#4b4b4b"/><path d="M8 10.500L24 5.500v6L15.500 14.200 24 17v6L8 28v-6l8.500-2.700L8 16.500z" fill="#ff9800"/></svg></div>
      <div class="tray">
        <span class="es">ES</span>
        <svg width="76" height="20" viewBox="0 0 76 20"><path d="M16.500 12.500h8l-4-4z" fill="#fff"/><g fill="none" stroke="#f2f2f2" stroke-width="1.200"><path d="M42 5.500h9.500v8H43M47 13.500v3M43.500 16.500h7M38.500 3v3M41.500 3v3M37.500 6h5v3h-5zM40 9v7.500h3"/></g><path d="M61 7.500h2.500L67 4v13l-3.500-4H61z" fill="#fff"/><path d="M69 8q1.500 2.500 0 5M71 6q3 4.500 0 9" fill="none" stroke="#ddd"/></svg>
        <div class="clock">21:07<br />28-04-2020</div>
        <div class="peek"></div>
      </div>
    </div>`;
  }

  render() {
    return html`
      ${this.chrome()}
      <div class="view">
        <main class="page">
          <h1>Speed test</h1>
          <div class="sub">Test de velocidad para tu conexión ADSL, VDSL, cable, fibra o satélite.</div>
          <div class="promo">
            <p><b>¡NUEVO!</b>  Crea tu cuenta de usuario nPerf para guardar el histórico de tus test</p>
            <div class="join">
              <svg width="26" height="24" viewBox="0 0 26 24"><circle cx="14.500" cy="12.500" r="9.800" fill="none" stroke="#fff" stroke-width="1.400"/><path d="M5 10.500Q8 2.500 15 2.500t9.500 9q-6 1.500-10-2.500-3 4-9.500 1.500z" fill="#fff"/><path d="M11.500 16.500q3.500 3 6.500 0" fill="none" stroke="#fff" stroke-width="1.300"/><path d="M5.500 12.500v11M0 18h11" stroke="#222" stroke-width="5"/><path d="M5.500 14v9M1 18.500h9" stroke="#fff" stroke-width="2.400"/></svg>
              Crear mi cuenta
            </div>
          </div>
          <div class="wrench"><svg width="51" height="27" viewBox="0 0 51 27"><path d="M.5 8A13 13.500 0 0 1 24.500 9H50.500V18H24.500A13 13.500 0 0 1 .5 19.500L11 18.500Q13 18 13 15V12Q13 8.500 11 8.300Z" fill="${LIME}"/></svg></div>
          <div class="stage">${this.gauge()}${this.panels()}</div>
          <div class="cards">
            <section class="card info">
              <i>Operador:</i><span>VTR</span><i>Tipo de conexión:</i><span>desconocido</span>
              <i class="gap">IPv4:</i><span class="gap">190.101.174.87</span>
              <i>IPv6:</i><span class="red">IPv6 no disponible</span><i>ASN:</i><span>AS22047</span>
              <i>Navegador</i><span>Firefox 75.0</span><i>Sistema</i><span>Win7 [64 bits]</span>
            </section>
            ${this.metric("down", "m1", "Descargar", [["Media", "84.05 Mb/s"]], "85.10", "Mb/s")}
            ${this.metric("up", "m2", "Cargar", [["Media", "10.11 Mb/s"]], "11.18", "Mb/s")}
            ${this.metric("lat", "m3 latency", "Latencia", [["Media", "25.88 ms"], ["Jitter", "10.00 ms"]], "22.00", "ms")}
          </div>
          <div class="totop"><svg width="40" height="24" viewBox="0 0 40 24"><path d="M2 16L16 3q4-4 8 0l14 13q2.500 6-3 7H5q-5.500-1-3-7z" fill="#fff"/></svg></div>
        </main>
        <div class="scroll">
          <div class="sbtn"><svg width="8" height="5"><path d="M0 5L4 0l4 5z" fill="#444"/></svg></div>
          <div class="thumb"><svg width="7" height="8"><path d="M0 .5h7M0 3.500h7M0 6.500h7" stroke="#3f7ea8"/></svg></div>
          <div class="sbtn"><svg width="8" height="5"><path d="M0 0l4 5 4-5z" fill="#444"/></svg></div>
        </div>
      </div>
      ${this.taskbar()}
    `;
  }
}
